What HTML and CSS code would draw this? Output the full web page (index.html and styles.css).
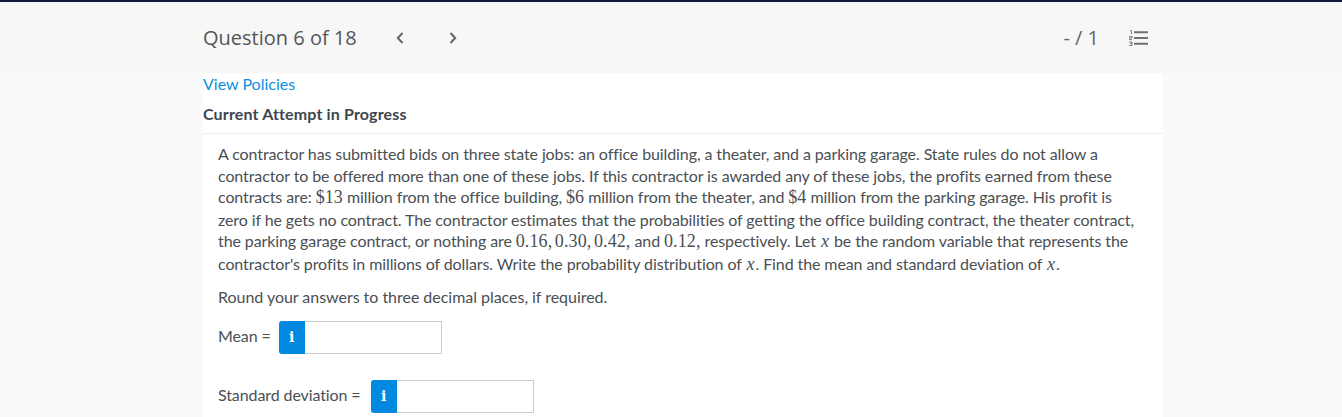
FILE: index.html
```html
<!DOCTYPE html>
<html>
<head>
<title>Question 6 of 18</title>
<meta charset='utf-8'/>
<link rel="stylesheet" href="styles.css">
</head>
<body>
<div class='header'>
	<div class='headerInner'>
		<span class='qTitle'>Question 6 of 18</span>
		<div class='arrows'>
			<svg width="8" height="12" viewBox="0 0 8 12"><path d="M6.5 1 L1.8 6 L6.5 11" fill="none" stroke="#666" stroke-width="2"/></svg>
			<svg width="8" height="12" viewBox="0 0 8 12"><path d="M1.5 1 L6.2 6 L1.5 11" fill="none" stroke="#666" stroke-width="2"/></svg>
		</div>
		<span class='score'>- / 1</span>
		<svg class='listIcon' width="19" height="16" viewBox="0 0 19 16">
			<path d="M5 2.2 H19 M5 8 H19 M5 13.8 H19" stroke="#707070" stroke-width="2" fill="none"/>
			<path d="M1 0.5 H2.5 V4 M0.2 6.5 H3 V8 H0.2 V9.6 H3 M0.2 12 H3 V15.5 H0.2 M1 13.7 H3" stroke="#707070" stroke-width="0.9" fill="none"/>
		</svg>
	</div>
</div>
<div class='page'>
	<a class='policies' href='#'>View Policies</a>
	<div class='attempt'>Current Attempt in Progress</div>
	<div class='question'>
		<p class='text'>A contractor has submitted bids on three state jobs: an office building, a theater, and a parking garage. State rules do not allow a<br/>
		contractor to be offered more than one of these jobs. If this contractor is awarded any of these jobs, the profits earned from these<br/>
		contracts are: <span class='math'>$13</span> million from the office building, <span class='math'>$6</span> million from the theater, and <span class='math'>$4</span> million from the parking garage. His profit is<br/>
		zero if he gets no contract. The contractor estimates that the probabilities of getting the office building contract, the theater contract,<br/>
		the parking garage contract, or nothing are <span class='math'>0.16, 0.30, 0.42,</span> and <span class='math'>0.12,</span> respectively. Let <i class='math varX'>x</i> be the random variable that represents the<br/>
		contractor's profits in millions of dollars. Write the probability distribution of <i class='math varX'>x</i>. Find the mean and standard deviation of <i class='math varX'>x</i>.</p>
		<p class='round'>Round your answers to three decimal places, if required.</p>
		<div class='answer'>
			<label>Mean =</label>
			<span class='info'>i</span>
			<input class='field' type='text'/>
		</div>
		<div class='answer'>
			<label>Standard deviation =</label>
			<span class='info'>i</span>
			<input class='field' type='text'/>
		</div>
	</div>
</div>
</body>
</html>
```

FILE: styles.css
```css
html, body {
	margin: 0;
	padding: 0;
	height: 417px;
	overflow: hidden;
}
body {
	background: #fafafa;
	border-top: 2px solid #14193f;
	box-sizing: border-box;
	font-family: Lato, "Liberation Sans", sans-serif;
	font-size: 16px;
	color: #4a4f54;
}
.header {
	background: #f7f7f7;
	height: 71px;
}
.headerInner {
	width: 960px;
	margin-left: 203px;
	height: 100%;
	display: flex;
	align-items: center;
	color: #555;
}
.qTitle {
	font-family: "Open Sans", sans-serif;
	font-size: 20px;
	width: 193px;
}
.arrows {
	display: flex;
	gap: 45px;
	align-items: center;
}
.score {
	font-family: "Open Sans", sans-serif;
	font-size: 20px;
	color: #666;
	margin-left: auto;
	margin-right: 30px;
}
.listIcon {
	margin-right: 15px;
}
.page {
	width: 960px;
	margin-left: 203px;
	background: #fff;
	height: 344px;
}
.policies {
	display: block;
	color: #0a90e0;
	text-decoration: none;
	line-height: 22px;
}
.attempt {
	font-weight: bold;
	color: #3d464d;
	line-height: 22px;
	letter-spacing: 0.15px;
	padding: 8px 0;
	border-bottom: 1px solid #eee;
}
.question {
	padding: 9px 15px 0;
	letter-spacing: -0.1px;
}
.text {
	margin: 0;
	line-height: 21.6px;
}
.math {
	font-family: "Liberation Serif", serif;
	font-size: 18px;
	letter-spacing: 0.1px;
	word-spacing: -2px;
}
.varX {
	padding: 0 1px;
}
.round {
	margin: 10px 0 0;
	line-height: 22px;
	letter-spacing: -0.03px;
}
.answer {
	display: flex;
	align-items: center;
	margin-top: 13px;
	height: 33px;
}
.answer + .answer {
	margin-top: 26px;
}
.answer label {
	margin-right: 8px;
	margin-bottom: 3px;
}
.answer + .answer label {
	margin-right: 10px;
}
.info {
	width: 26px;
	height: 33px;
	background: #0089de;
	border-radius: 3px 0 0 3px;
	color: #fff;
	font-family: "DejaVu Serif", serif;
	font-weight: bold;
	font-size: 14px;
	display: flex;
	align-items: center;
	justify-content: center;
}
.field {
	width: 137px;
	height: 33px;
	box-sizing: border-box;
	border: 1px solid #ccc;
	border-left: 0;
	padding: 0;
	background: #fff;
}
```
